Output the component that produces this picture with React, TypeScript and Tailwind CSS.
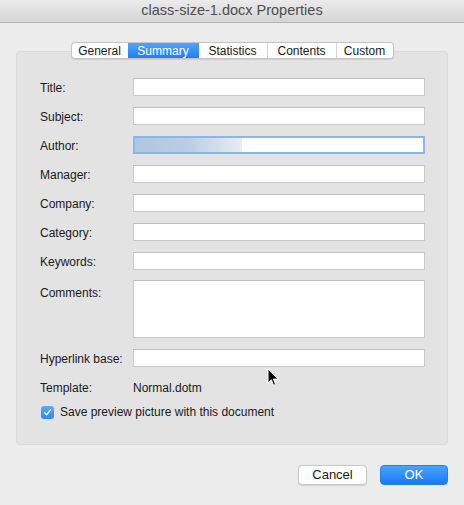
import React from "react";

const tabs = ["General", "Summary", "Statistics", "Contents", "Custom"];
const tabWidths = ["w-[56px]", "w-[71px]", "w-[68px]", "w-[69px]", "w-[57px]"];

const fields = ["Title:", "Subject:", "Author:", "Manager:", "Company:", "Category:", "Keywords:"];

const TextBox: React.FC<{ tall?: boolean }> = ({ tall }) => (
  <div
    className={`bg-white border border-[#c9c9c9] border-t-[#bdbdbd] ${tall ? "h-[58px]" : "h-[18px]"}`}
  />
);

const App: React.FC = () => {
  return (
    <div
      className="relative w-[464px] h-[505px] bg-[#ececec] flex flex-col text-[12px] text-[#1a1a1a] overflow-hidden"
      style={{ fontFamily: "'Liberation Sans', Arial, sans-serif" }}
    >
      {/* Title bar */}
      <div className="h-[23px] shrink-0 flex items-center justify-center bg-gradient-to-b from-[#ebebeb] to-[#d5d5d5] border-b border-[#b5b5b5] text-[#4d4d4d] text-[14.5px]">
        class-size-1.docx Properties
      </div>

      <div className="flex flex-col px-4 pt-[19px]">
        {/* Tabs */}
        <div className="relative z-10 flex justify-center -mb-[8px]">
          <div className="flex h-[17px] bg-white border border-[#c4c4c4] rounded-[4px] overflow-hidden shadow-[0_0.5px_1px_rgba(0,0,0,0.1)]">
            {tabs.map((t, i) => (
              <div
                key={t}
                className={`flex items-center justify-center leading-none ${tabWidths[i]} ${
                  t === "Summary"
                    ? "bg-gradient-to-b from-[#51a3fc] to-[#1b7ff6] text-white"
                    : "text-[#1a1a1a]"
                } ${i > 2 ? "border-l border-[#d4d4d4]" : ""}`}
              >
                {t}
              </div>
            ))}
          </div>
        </div>

        {/* Group box */}
        <div className="h-[394px] bg-[#e3e3e3] border border-[#dadada] rounded-[4px] pl-[23px] pr-[22px] pt-[26px]">
          <div className="grid grid-cols-[93px_1fr] gap-y-[11px] items-center">
            {fields.map((f) => (
              <React.Fragment key={f}>
                <div className="h-[18px] leading-[20px]">{f}</div>
                {f === "Author:" ? (
                  <div className="h-[18px] bg-white border-[2px] border-[#8cb5ea] flex items-stretch">
                    <div className="w-[107px] bg-gradient-to-r from-[#b0c6e0] via-[#bccde2] to-[#e8edf3]" />
                  </div>
                ) : (
                  <TextBox />
                )}
              </React.Fragment>
            ))}
            <div className="self-start leading-[20px] pt-[2px]">Comments:</div>
            <div className="-mt-[1px]">
              <TextBox tall />
            </div>
            <div className="h-[18px] leading-[20px]">Hyperlink base:</div>
            <TextBox />
          </div>

          <div className="grid grid-cols-[93px_1fr] mt-[11px] h-[18px] leading-[20px]">
            <div>Template:</div>
            <div>Normal.dotm</div>
          </div>

          <div className="flex items-center mt-[6px] gap-[6px] leading-[18px]">
            <div className="w-[13px] h-[13px] ml-[1px] mt-[1px] rounded-[3px] bg-gradient-to-b from-[#5aaafc] to-[#2a88f7] flex items-center justify-center">
              <svg width="9" height="9" viewBox="0 0 10 10" fill="none">
                <path d="M1.8 5.4 L4 7.6 L8.3 2" stroke="white" strokeWidth="1.5" strokeLinecap="round" strokeLinejoin="round" />
              </svg>
            </div>
            <span className="pt-[1px]">Save preview picture with this document</span>
          </div>
        </div>

        {/* Buttons */}
        <div className="flex justify-end gap-[13px] mt-[20px] text-[13px]">
          <div className="w-[69px] h-[20px] flex items-center justify-center bg-white border border-[#c8c8c8] rounded-[4px] shadow-[0_0.5px_1px_rgba(0,0,0,0.12)]">
            Cancel
          </div>
          <div className="w-[68px] h-[20px] flex items-center justify-center text-white rounded-[4px] bg-gradient-to-b from-[#4ba2fc] to-[#1478f5] border border-[#1f7ef0]">
            OK
          </div>
        </div>
      </div>

      {/* Mouse pointer */}
      <svg className="absolute left-[267px] top-[368px]" width="12" height="19" viewBox="0 0 12 19">
        <path d="M1 1 L1 15 L4.3 11.8 L6.6 17.3 L8.6 16.4 L6.4 11.1 L11 11.1 Z" fill="black" stroke="white" strokeWidth="1" />
      </svg>
    </div>
  );
};

export default App;
